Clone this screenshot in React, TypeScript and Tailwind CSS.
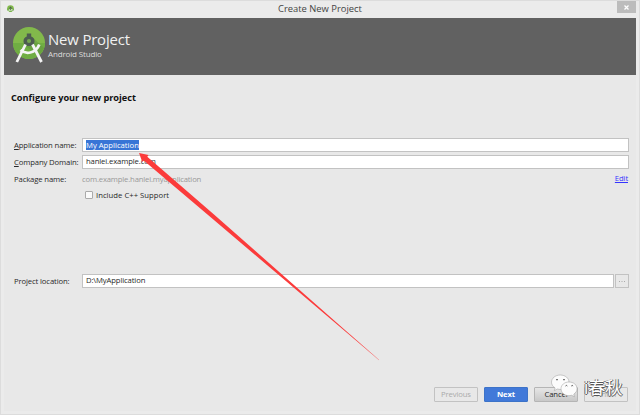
import React from "react";

function StudioLogo({ className }: { className: string }) {
  return (
    <svg viewBox="0 0 34 38" className={className}>
      <circle cx="17" cy="17" r="16" fill="#82b94b" />
      <path d="M1 17a16 16 0 0 0 32 0Z" fill="#70ad43" />
      <path d="M20 11 32 22A16 16 0 0 1 26 30L13 19Z" fill="#60963e" opacity=".5" />
      <path d="M14.800 7.500h4.400v3a5 5 0 0 1 0 9.400h-4.400a5 5 0 0 1 0-9.400Z" fill="#4d5c50" />
      <circle cx="17" cy="15" r="2.100" fill="#73a550" />
      <path d="M8.500 24c5 4.500 15 4 18.800-5.500" fill="none" stroke="#f4f4f4" strokeWidth="2.800" />
      <path d="M13.500 18.500 4.800 36M20.500 18.500l9 17.500" fill="none" stroke="#f4f4f4" strokeWidth="2.800" />
    </svg>
  );
}

function Field({ children, className }: { children: React.ReactNode; className: string }) {
  return (
    <div className={`flex h-[14px] items-center border border-[#c2c2c2] bg-white pl-[3px] leading-none ${className}`}>
      {children}
    </div>
  );
}

function Label({ children }: { children: React.ReactNode }) {
  return <span className="w-[68px] shrink-0 pt-px">{children}</span>;
}

const button = "flex h-[15px] w-[44px] items-center justify-center rounded-[1px] border";

export default function App() {
  return (
    <div className="relative flex h-[415px] w-[640px] flex-col overflow-hidden whitespace-nowrap border border-[#dcdcdc] bg-[#ebebeb] px-[3px] pb-[3px] font-['Open_Sans','Noto_Sans_CJK_SC',sans-serif] text-[7.7px] leading-none tracking-[-0.13px] text-[#282828]">
      <header className="flex h-[17px] shrink-0 items-start">
        <StudioLogo className="ml-[3px] mt-1 h-[8px] w-[7px]" />
        <h1 className="ml-[264px] mt-[3px] text-[9.4px] leading-[10px] text-[#444] tracking-[0px]">Create New Project</h1>
        <button className="ml-auto flex h-[12px] w-[19px] items-center justify-center bg-[#bcbcbc]" aria-label="Close">
          <svg viewBox="0 0 5 5" className="h-[5px] w-[5px]">
            <path d="m.5.5 4 4m0-4-4 4" stroke="#fff" strokeWidth="1.3" />
          </svg>
        </button>
      </header>

      <main className="flex flex-1 flex-col bg-[#e8e8e8]">
        <div className="flex h-[57px] shrink-0 bg-[#616161]">
          <StudioLogo className="ml-[8px] mt-[8px] h-[38px] w-[34px]" />
          <div className="ml-[2px] mt-[13px] text-[#f1f1f1]">
            <h2 className="text-[14.9px] leading-[16px] tracking-[-0.15px]">New Project</h2>
            <p className="mt-[2px] text-[8px] leading-[9px] tracking-[-0.15px] text-[#ddd]">Android Studio</p>
          </div>
        </div>

        <h3 className="ml-[7px] mt-[18px] text-[9.2px] font-bold leading-[10px] tracking-[0px] text-[#111]">Configure your new project</h3>

        <div className="mt-[35px] flex items-center pl-[10px] pr-[7px]">
          <Label>
            <span className="underline">A</span>pplication name:
          </Label>
          <Field className="flex-1">
            <span className="bg-[#3875d6] pb-px pt-[2px] tracking-[0px] text-white">My Application</span>
          </Field>
        </div>
        <div className="mt-[3px] flex items-center pl-[10px] pr-[7px]">
          <Label>
            <span className="underline">C</span>ompany Domain:
          </Label>
          <Field className="flex-1">hanlei.example.com</Field>
        </div>
        <div className="mt-[4px] flex h-[12px] items-center pl-[10px] pr-[8px]">
          <Label>Package name:</Label>
          <span className="pt-px tracking-[-0.17px] text-[#999]">com.example.hanlei.myapplication</span>
          <a className="ml-auto text-[#3535ff] underline">Edit</a>
        </div>
        <label className="ml-[81px] mt-[5px] flex h-[10px] items-center gap-[3px]">
          <span className="h-[8px] w-[8px] rounded-[1px] border border-[#aaa] bg-[#fafafa]" />
          <span className="pt-px tracking-[0.02px]">Include C++ Support</span>
        </label>

        <div className="mt-[74px] flex items-center pl-[10px] pr-[7px]">
          <Label>Project location:</Label>
          <Field className="flex-1">D:\MyApplication</Field>
          <button className="ml-px flex h-[14px] w-[14px] items-center justify-center border border-[#c2c2c2]" aria-label="Browse">
            <svg viewBox="0 0 6 1" className="h-px w-[6px]">
              <path d="M0 .5h1m1.500 0h1m1.500 0h1" stroke="#aaa" />
            </svg>
          </button>
        </div>

        <footer className="mb-[9px] ml-[430px] mt-auto flex gap-[6px]">
          <button className={`${button} border-[#c2c2c2] text-[#aaa]`}>Previous</button>
          <button className={`${button} border-[#3d73c8] bg-[#4179d9] font-bold text-white`}>Next</button>
          <button className={`${button} border-[#b5b5b5] bg-linear-to-b from-[#e6e6e6] to-[#c8c8c8]`}>Cancel</button>
          <button className={`${button} border-[#c2c2c2] text-[#aaa]`}>Finish</button>
        </footer>
      </main>

      <svg viewBox="0 0 640 415" className="pointer-events-none absolute -left-px -top-px h-[415px] w-[640px]">
        <path d="M139 153 148.500 155 147.300 156.800 214 214.500 379 360 211 217.500 143.700 160.500 142.300 162Z" fill="#fb3b3b" />
        <path d="M350 334.800 379 360" fill="none" stroke="#fb5555" strokeOpacity=".5" strokeWidth=".8" />
        <g fill="#fcfcfc" stroke="#999" strokeWidth=".5">
          <path d="M560.300 375c5 0 8.700 3.200 8.700 7.200s-3.700 7.300-8.700 7.300l-3-.5-3 1.700.8-2.800c-2.200-1.300-3.600-3.400-3.600-5.700 0-4 3.900-7.200 8.800-7.200Z" />
          <path d="M569 382c4.500 0 8 2.800 8 6.700 0 2.300-1.200 4.200-3.200 5.400l.6 2.700-2.700-1.500-2.700.4c-4.500 0-8-3.200-8-7s3.500-6.700 8-6.700Z" />
        </g>
        <path d="M556 380q1-1.200 2 0M563 380q1-1.200 2 0M565.500 386q.9-1.200 1.800 0M571.300 386q.9-1.200 1.800 0" fill="none" stroke="#444" strokeWidth=".9" />
      </svg>
      <div className="absolute left-[583px] top-[377px] text-[17.5px] leading-[18px] tracking-[-0.5px] text-white [text-shadow:-1px_0_0_#777,0_1px_0_#555,1px_0_0_#555]">
        i春秋
      </div>
    </div>
  );
}
